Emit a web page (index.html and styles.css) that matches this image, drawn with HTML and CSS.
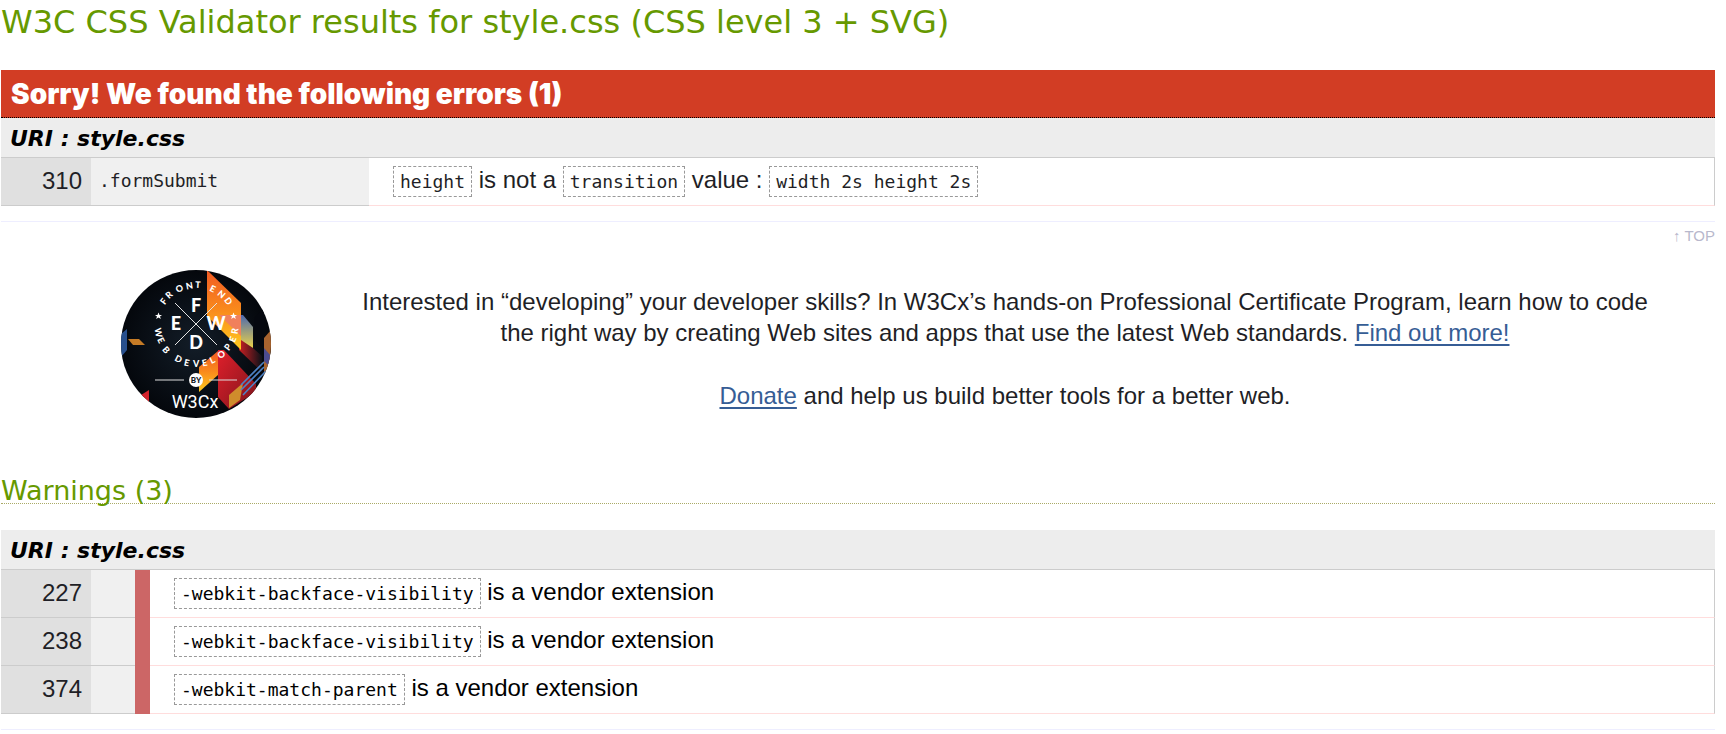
FILE: index.html
```html
<!DOCTYPE html>
<html lang="en">
<head>
<meta charset="utf-8">
<title>W3C CSS Validator results for style.css (CSS level 3 + SVG)</title>
<link rel="stylesheet" href="styles.css">
</head>
<body>
<main class="results" id="top">
  <h1 class="title">W3C CSS Validator results for style.css (CSS level 3 + SVG)</h1>

  <section class="errors">
    <h2 class="banner">Sorry! We found the following errors (1)</h2>
    <h3 class="uri">URI : style.css</h3>
    <table class="report">
      <tbody>
        <tr>
          <td class="line">310</td>
          <td class="context"><code>.formSubmit</code></td>
          <td class="message"><code class="token">height</code> is not a <code class="token">transition</code> value : <code class="token">width 2s height 2s</code></td>
        </tr>
      </tbody>
    </table>
  </section>

  <p class="back"><a class="back-link" href="#top">↑ TOP</a></p>

  <section class="promo">
    <svg class="badge" viewBox="0 0 150 148" role="img" aria-label="W3Cx Front End Web Developer">
      <defs>
        <clipPath id="disc"><ellipse cx="75" cy="74" rx="75" ry="74"/></clipPath>
        <linearGradient id="flame" x1="0" y1="0" x2="0" y2="1"><stop offset="0" stop-color="#f15a24"/><stop offset=".5" stop-color="#f98a1c"/><stop offset="1" stop-color="#ffcb1f"/></linearGradient>
        <linearGradient id="sky" x1="0" y1="0" x2="0" y2="1"><stop offset="0" stop-color="#4d69ae"/><stop offset="1" stop-color="#ead34a"/></linearGradient>
        <linearGradient id="ember" x1="0" y1="0" x2="1" y2="0"><stop offset="0" stop-color="#c91f22"/><stop offset="1" stop-color="#0c1118"/></linearGradient>
        <linearGradient id="ruby" x1="0" y1="0" x2="1" y2="1"><stop offset="0" stop-color="#e01f2b"/><stop offset="1" stop-color="#7d151c"/></linearGradient>
        <radialGradient id="night"><stop offset="0" stop-color="#131d28"/><stop offset="1" stop-color="#04070c"/></radialGradient>
      </defs>
      <g clip-path="url(#disc)">
        <rect width="150" height="148" fill="url(#night)"/>
        <path d="M118 66 L141 86 V102 L118 80Z" fill="url(#ember)"/>
        <path d="M98 45 H122 L132 57 V78 L120 70Z" fill="url(#sky)"/>
        <path d="M86 0 L120 33 V80 L86 46Z" fill="url(#flame)"/>
        <path d="M98 45 H120 V66Z" fill="#f0805c"/>
        <path d="M133 48 L143 38 V66 L150 78 V85 L133 70Z" fill="#05080f"/>
        <path d="M143 68 L150 60 V112 L143 105Z" fill="#a9642f"/>
        <path d="M143 78 L150 86 V98 L143 91Z" fill="#4c4c90"/>
        <path d="M97 80 L103 80 L135 114 V122 L108 139 L97 127Z" fill="url(#ruby)"/>
        <path d="M78 97 L97 81 V105 L78 122Z" fill="url(#flame)"/>
        <path d="M108 125 L122 113 L119 130 L108 138Z" fill="#cf8c2c"/>
        <path d="M120 115 L143 92 M120 120 L143 97 M122 125 L145 101" fill="none" stroke="#4d82c5" stroke-width="1.6"/>
        <path d="M0 64 L6 59 V80 L0 87Z" fill="#28508e"/>
        <path d="M7 69 H18 L24 75 H12Z" fill="#c57b26"/>
        <path d="M20 125 L28 120 V134Z" fill="#d4232d"/>
      </g>
      <path d="M54 33 L96 75 M96 33 L54 75" stroke="#e4e4e4" stroke-width="1"/>
      <path d="M34 110 H63 M88 110 H116" stroke="#dedede" stroke-width="1"/>
      <circle cx="75" cy="110" r="7" fill="#fff"/>
      <path id="star" d="M37.5 42.5 L38.5 45 H41 L39 46.6 L39.8 49 L37.5 47.6 L35.2 49 L36 46.6 L34 45 H36.5Z" fill="#fff"/>
      <use href="#star" x="75"/>
      <g class="ring">
        <text x="43.7 47.9 56.6 65.6 73.9" y="35.2 29.2 23 19.5 17.8" rotate="-54 -43 -26 -10 3">FRONT</text>
        <text x="88 95.8 102.8" y="20.4 24.4 30.3" rotate="26 40 54">END</text>
        <text x="33.5 36 40.8" y="58.6 69.6 79.7" rotate="80 64 49">WEB</text>
        <text x="53 62.4 72 81.8 90.5 99.5 107.7 113.7 116.4" y="90.3 95.2 97 96.6 94 89.2 81.2 72.9 64.5" rotate="27 13 0 -13 -25 -39 -54 -68 -80">DEVELOPER</text>
      </g>
      <g class="initials">
        <text x="75" y="42">F</text>
        <text x="55" y="60">E</text>
        <text x="95" y="60">W</text>
        <text x="75" y="79">D</text>
      </g>
      <text class="by" x="75" y="113">BY</text>
      <text class="brand" x="74" y="138">W3Cx</text>
    </svg>
    <div class="pitch">
      <p>Interested in “developing” your developer skills? In W3Cx’s hands-on Professional Certificate Program, learn how to code the right way by creating Web sites and apps that use the latest Web standards. <a href="#more">Find out more!</a></p>
      <p><a href="#donate">Donate</a> and help us build better tools for a better web.</p>
    </div>
  </section>

  <section class="warnings">
    <h2 class="subtitle">Warnings (3)</h2>
    <h3 class="uri">URI : style.css</h3>
    <table class="report">
      <tbody>
        <tr>
          <td class="line">227</td>
          <td class="level"></td>
          <td class="flag"></td>
          <td class="message"><code class="token">-webkit-backface-visibility</code> is a vendor extension</td>
        </tr>
        <tr>
          <td class="line">238</td>
          <td class="level"></td>
          <td class="flag"></td>
          <td class="message"><code class="token">-webkit-backface-visibility</code> is a vendor extension</td>
        </tr>
        <tr>
          <td class="line">374</td>
          <td class="level"></td>
          <td class="flag"></td>
          <td class="message"><code class="token">-webkit-match-parent</code> is a vendor extension</td>
        </tr>
      </tbody>
    </table>
  </section>
  <hr class="rule">
</main>
</body>
</html>
```
FILE: styles.css
```css
* {
  box-sizing: border-box;
}

body {
  margin: 0;
  background: #fff;
  color: #1f1f26;
  font: 24px/32px "Liberation Sans", Arial, sans-serif;
}

h1, h2, h3, p {
  margin: 0;
}

a {
  color: #365d95;
  text-decoration-thickness: 2px;
  text-underline-offset: 3px;
}

.results {
  padding: 0 11px 0 1px;
}

.title,
.subtitle {
  color: #690;
  font-family: Verdana, "DejaVu Sans", sans-serif;
  font-weight: 400;
}

.title {
  padding: 2px 0 28px;
  font-size: 32px;
  line-height: 40px;
}

.banner {
  padding: 8px 10px 7px;
  border-bottom: 1px dotted #000;
  background: #d23d24;
  color: #fff;
  font: 900 28px/32px Inter, sans-serif;
}

.uri {
  padding: 5px 9px 2px;
  background: #ededed;
  color: #000;
  font: italic 700 22px/32px Verdana, "DejaVu Sans", sans-serif;
}

.report {
  width: 100%;
  border-collapse: separate;
  border-spacing: 0;
  border-top: 1px solid #ccc;
}

.report td {
  height: 48px;
  padding: 0 0 2px;
  border-bottom: 1px solid #ccc;
}

.report .line {
  width: 90px;
  padding-right: 9px;
  background: #e0e0e0;
  text-align: right;
}

.report .context {
  width: 278px;
  padding: 0 0 6px 8px;
  background: #f0f0f0;
}

.report .level {
  width: 44px;
  background: #f0f0f0;
}

.report .flag {
  width: 15px;
  border-bottom-color: #c66;
  background: #c66;
}

.report .message {
  padding-left: 24px;
  border-right: 1px solid #ccc;
  border-bottom-color: #fdd;
}

.warnings .message {
  color: #000;
}

code {
  font: 18px/29px "DejaVu Sans Mono", monospace;
}

.token {
  display: inline-block;
  padding: 0 6px;
  border: 1px dashed #999;
}

.back {
  margin-top: 15px;
  border-top: 1px solid #eef;
  font-size: 15px;
  line-height: 28px;
  text-align: right;
}

.back-link {
  color: #b8b8cc;
  text-decoration: none;
}

.promo {
  display: flex;
  align-items: flex-start;
  gap: 80px;
  padding: 20px 56px 0 120px;
}

.badge {
  flex: none;
  width: 150px;
  height: 148px;
}

.badge text {
  fill: #fff;
  font-family: Lato, sans-serif;
  font-weight: 900;
}

.ring text {
  font-size: 9px;
}

.initials text {
  font-size: 18px;
  text-anchor: middle;
}

.badge .by {
  fill: #10161d;
  font-size: 8px;
  text-anchor: middle;
}

.badge .brand {
  font-family: "Liberation Sans Narrow", Roboto, sans-serif;
  font-size: 18px;
  font-weight: 400;
  text-anchor: middle;
}

.pitch {
  display: grid;
  flex: 1;
  gap: 32px;
  padding-top: 16px;
  line-height: 31px;
  text-align: center;
}

.subtitle {
  margin: 61px 0 26px;
  border-bottom: 1px dotted #aa6;
  font-size: 27px;
  line-height: 24px;
}

.rule {
  margin: 15px 0 0;
  border: 0;
  border-top: 1px solid #eef;
}
```
